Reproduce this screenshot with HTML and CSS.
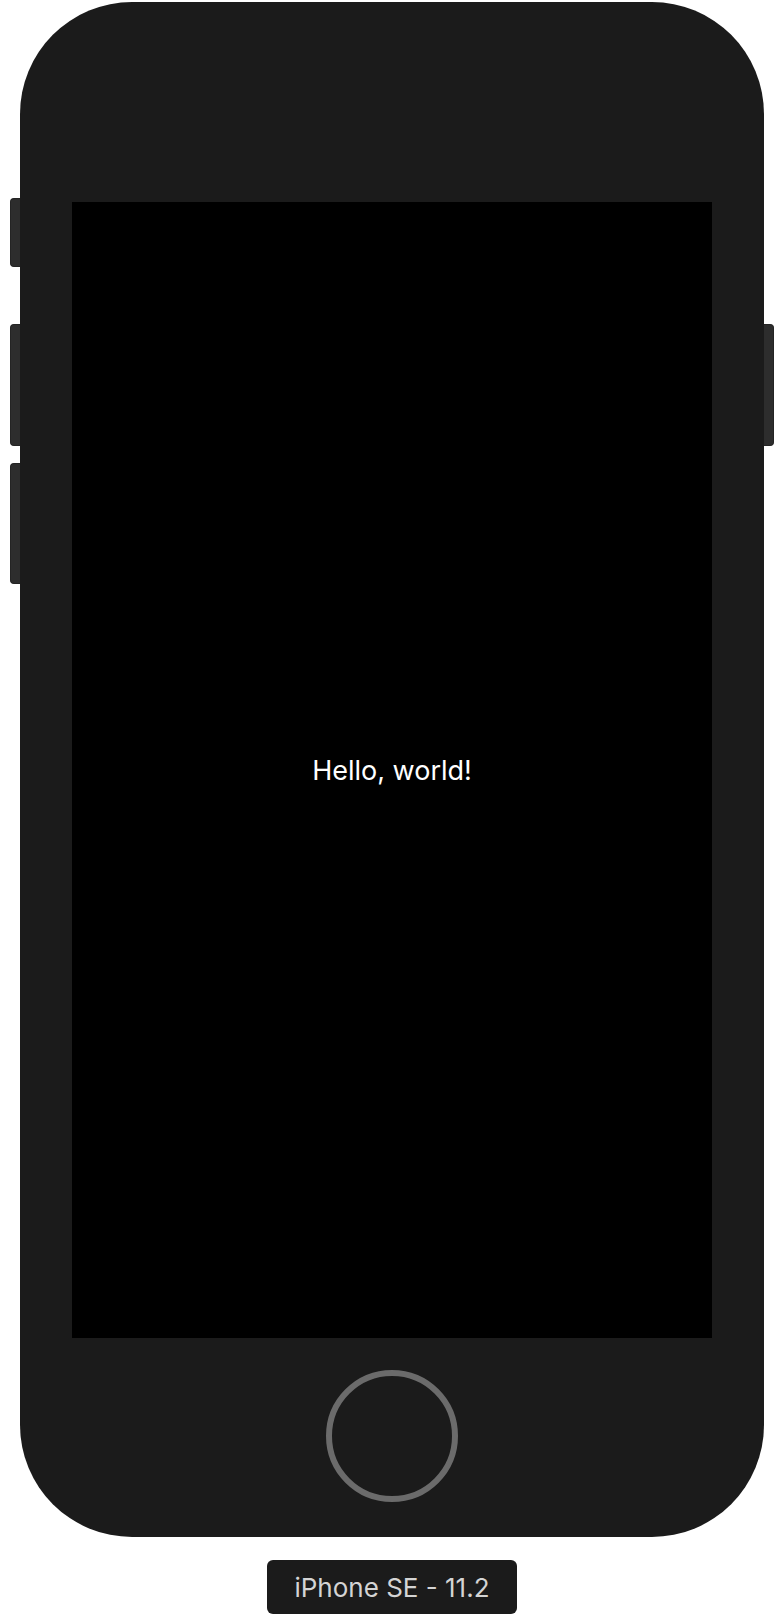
FILE: index.html
```html
<!DOCTYPE html>
<html>
<head>
<meta charset="utf-8">
<link rel="stylesheet" href="styles.css">
</head>
<body>
<div class="stage">
  <div class="device">
    <div class="btn btn-left btn-mute"></div>
    <div class="btn btn-left btn-vol-up"></div>
    <div class="btn btn-left btn-vol-down"></div>
    <div class="btn btn-right btn-power"></div>
    <div class="screen">
      <span class="hello">Hello, world!</span>
    </div>
    <div class="home-area">
      <div class="home-button"></div>
    </div>
  </div>
  <div class="label">iPhone SE - 11.2</div>
</div>
</body>
</html>
```
FILE: styles.css
```css
html, body {
  margin: 0;
  padding: 0;
  background: #ffffff;
}
.stage {
  display: flex;
  flex-direction: column;
  align-items: center;
  padding-top: 2px;
  width: 784px;
}
.device {
  position: relative;
  width: 744px;
  height: 1535px;
  box-sizing: border-box;
  background: #1b1b1b;
  border-radius: 112px;
  padding: 200px 52px 0 52px;
  display: flex;
  flex-direction: column;
}
.btn {
  position: absolute;
  background: #2d2d2d;
  border: 1px solid #242424;
  box-sizing: border-box;
}
.btn-left {
  left: -10px;
  width: 10px;
  border-right: none;
  border-radius: 4px 0 0 4px;
}
.btn-right {
  right: -10px;
  width: 10px;
  border-left: none;
  border-radius: 0 4px 4px 0;
}
.btn-mute { top: 196px; height: 69px; }
.btn-vol-up { top: 322px; height: 122px; }
.btn-vol-down { top: 461px; height: 121px; }
.btn-power { top: 322px; height: 122px; }
.screen {
  width: 640px;
  height: 1136px;
  background: #000000;
  display: flex;
  align-items: center;
  justify-content: center;
}
.hello {
  font-family: Inter, "Noto Sans", sans-serif;
  font-size: 27px;
  color: #ffffff;
}
.home-area {
  display: flex;
  justify-content: center;
  padding-top: 32px;
}
.home-button {
  width: 132px;
  height: 132px;
  box-sizing: border-box;
  border: 6px solid #6b6b6b;
  border-radius: 50%;
}
.label {
  margin-top: 23px;
  height: 54px;
  box-sizing: border-box;
  padding: 0 27px;
  background: #1b1b1b;
  border-radius: 6px;
  display: flex;
  align-items: center;
  font-family: Inter, "Noto Sans", sans-serif;
  font-size: 26px;
  color: #d4d4d4;
}
```
